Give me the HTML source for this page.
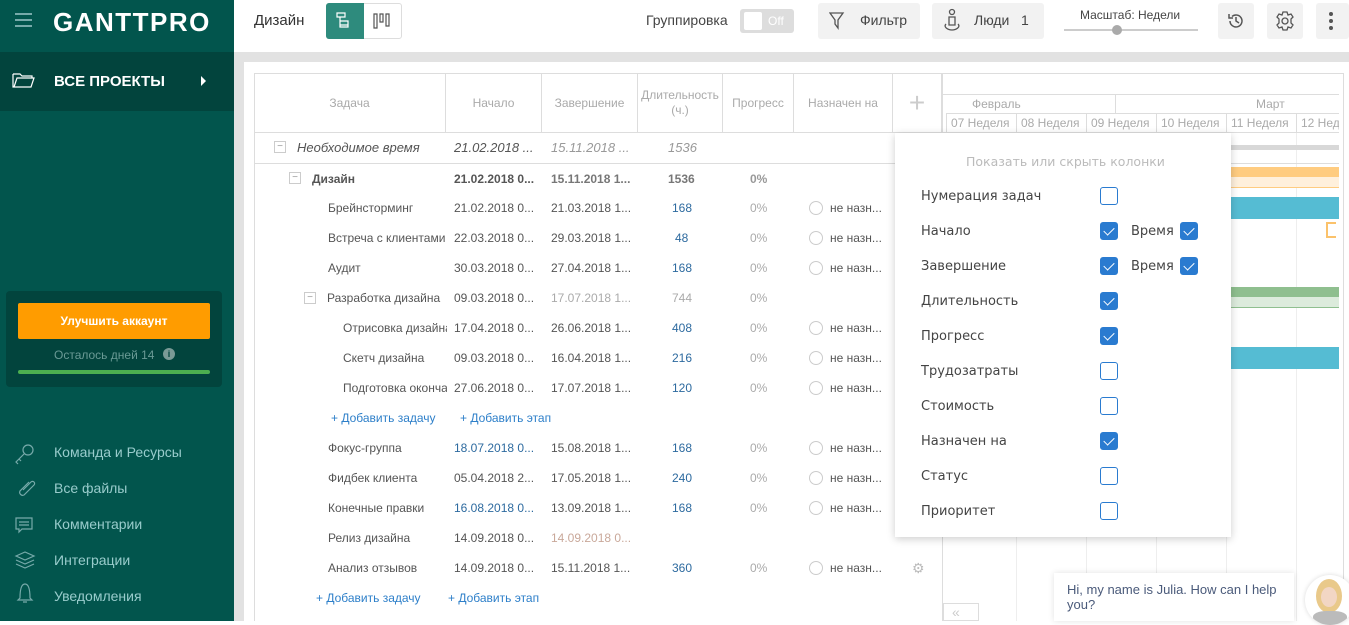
<!DOCTYPE html>
<html><head><meta charset="utf-8"><style>
*{box-sizing:border-box;margin:0;padding:0}
body{width:1349px;height:621px;overflow:hidden;font-family:"Liberation Sans",sans-serif;background:#fff;position:relative;font-size:12px;color:#555}
.a{position:absolute}
.side{left:0;top:0;width:234px;height:621px;background:#02554d}
.nav{left:0;top:52px;width:234px;height:59px;background:#02443d}
.top{left:234px;top:0;width:1115px;height:52px;background:#fff}
.gray{left:234px;top:52px;width:1115px;height:569px;background:#e2e2e2}
.panel{left:244px;top:62px;width:1105px;height:559px;background:#fff}
.btn{background:#f2f2f2;border-radius:3px}
.th{color:#aaa;font-size:12px;text-align:center;display:flex;align-items:center;justify-content:center;border-right:1px solid #ddd;height:59px;top:73px}
.r{font-size:12px;white-space:nowrap;color:#555}
.cb{width:18px;height:18px;border:1.5px solid #2a7bd0;border-radius:3px}
.cb.on{background:#2a7bd0}
.cb.on::after{content:"";position:absolute;left:5px;top:2px;width:5px;height:9px;border:solid #fff;border-width:0 1.5px 1.5px 0;transform:rotate(45deg)}
.pl{font-family:"DejaVu Sans",sans-serif;font-size:13px;color:#444}
.circ{width:14px;height:14px;border:1px solid #ccc;border-radius:50%}
.sb{color:#9cc;font-size:14px}
.wk{display:inline-block;border-left:1px solid #ddd;padding-left:4px;overflow:hidden;white-space:nowrap;height:19px;line-height:19px}
</style></head><body>
<div class="a side"></div>
<div class="a nav"></div>
<div class="a" style="left:15px;top:13px;width:17px;height:2px;background:#7aa;box-shadow:0 6px 0 #7aa,0 12px 0 #7aa"></div>
<div class="a" style="left:53px;top:7px;color:#fff;font-size:26px;font-weight:bold;letter-spacing:1.5px">GANTTPRO</div>
<svg class="a" style="left:12px;top:72px" width="24" height="16"><path d="M1 2h7l2 2h10v2M1 2v13h18l3-9H5L2 15" fill="none" stroke="#fff" stroke-width="1.2"/></svg>
<div class="a" style="left:54px;top:73px;color:#fff;font-size:15px;font-weight:bold">ВСЕ ПРОЕКТЫ</div>
<div class="a" style="left:201px;top:76px;width:0;height:0;border-left:5px solid #fff;border-top:5px solid transparent;border-bottom:5px solid transparent"></div>
<div class="a" style="left:6px;top:291px;width:216px;height:96px;background:#02443d;border-radius:4px"></div>
<div class="a" style="left:18px;top:303px;width:192px;height:36px;background:#ff9c00;border-radius:2px;color:#fff;font-weight:bold;font-size:12px;text-align:center;line-height:36px">Улучшить аккаунт</div>
<div class="a" style="left:54px;top:348px;color:#6a9a95;font-size:12px">Осталось дней 14</div>
<div class="a" style="left:163px;top:348px;width:12px;height:12px;border-radius:50%;background:#7a9a96;color:#02443d;font-size:9px;text-align:center;line-height:12px;font-weight:bold">i</div>
<div class="a" style="left:18px;top:370px;width:192px;height:4px;background:#4caf50;border-radius:2px"></div>
<div class="a sb" style="left:54px;top:444px">Команда и Ресурсы</div>
<div class="a sb" style="left:54px;top:480px">Все файлы</div>
<div class="a sb" style="left:54px;top:516px">Комментарии</div>
<div class="a sb" style="left:54px;top:552px">Интеграции</div>
<div class="a sb" style="left:54px;top:588px">Уведомления</div>
<svg class="a" style="left:14px;top:444px" width="22" height="160" fill="none" stroke="#7aa" stroke-width="1.2"><circle cx="14" cy="6" r="5"/><path d="M10 10L2 18l2 2M5 15l2 2"/><path d="M15 38l-9 9a3 3 0 0 0 4 4l10-10a2 2 0 0 0-3-3l-8 8"/><path d="M2 74h16v11H8l-3 3v-3H2z M5 78h10M5 81h10"/><path d="M2 112l9-4 9 4-9 4z M2 116l9 4 9-4 M2 120l9 4 9-4"/><path d="M6 154c0-10 2-14 5-14s5 4 5 14l2 2H4z M9 158h4"/></svg>
<div class="a top"></div>
<div class="a gray"></div>
<div class="a panel"></div>
<div class="a" style="left:254px;top:12px;font-size:15px;color:#333">Дизайн</div>
<div class="a" style="left:326px;top:3px;width:76px;height:36px;border:1px solid #ddd;border-radius:3px"></div>
<div class="a" style="left:326px;top:3px;width:38px;height:36px;background:#2e8b7d;border-radius:3px 0 0 3px"></div>
<svg class="a" style="left:336px;top:12px" width="60" height="18" fill="none" stroke-width="1.2"><path d="M1 1h8v4H1zM4 5v4h8v4H4zM4 9v6h8v-2" stroke="#fff"/><path d="M38 2h3v14h-3zM44 2h3v8h-3zM50 2h3v12h-3z" stroke="#555"/></svg>
<div class="a" style="left:646px;top:12px;font-size:14px;color:#444">Группировка</div>
<div class="a" style="left:740px;top:9px;width:54px;height:24px;background:#ddd;border-radius:3px"></div>
<div class="a" style="left:744px;top:12px;width:18px;height:18px;background:#fff;border-radius:2px"></div>
<div class="a" style="left:768px;top:14px;color:#fff;font-size:12px">Off</div>
<div class="a btn" style="left:818px;top:3px;width:102px;height:36px"></div>
<svg class="a" style="left:829px;top:12px" width="16" height="18"><path d="M1 1h13l-5 7v8l-3-4V8z" fill="none" stroke="#555" stroke-width="1.3"/></svg>
<div class="a" style="left:860px;top:12px;font-size:14px;color:#444">Фильтр</div>
<div class="a btn" style="left:932px;top:3px;width:112px;height:36px"></div>
<svg class="a" style="left:942px;top:8px" width="20" height="26" fill="none" stroke="#555" stroke-width="1.3"><circle cx="10" cy="4" r="2.5"/><path d="M7 9h6v8H7zM4 16c-3 3 2 6 6 6s9-3 6-6"/></svg>
<div class="a" style="left:974px;top:12px;font-size:14px;color:#444">Люди &nbsp;&nbsp;1</div>
<div class="a" style="left:1080px;top:8px;font-size:12px;color:#444">Масштаб: Недели</div>
<div class="a" style="left:1064px;top:29px;width:134px;height:2px;background:#ccc"></div>
<div class="a" style="left:1112px;top:25px;width:10px;height:10px;border-radius:50%;background:#aaa"></div>
<div class="a btn" style="left:1218px;top:3px;width:36px;height:36px"></div>
<svg class="a" style="left:1227px;top:12px" width="18" height="18" fill="none" stroke="#555" stroke-width="1.5"><path d="M3 9a6 6 0 1 0 2-4.5M2 2v4h4M9 5v4l3 2"/></svg>
<div class="a btn" style="left:1267px;top:3px;width:36px;height:36px"></div>
<svg class="a" style="left:1275px;top:11px" width="20" height="20" fill="none" stroke="#555" stroke-width="1.3"><circle cx="10" cy="10" r="3"/><path d="M8 1h4l1 3 3-1 2 3-2 2v4l2 2-2 3-3-1-1 3H8l-1-3-3 1-2-3 2-2V8L2 6l2-3 3 1z"/></svg>
<div class="a btn" style="left:1316px;top:3px;width:33px;height:36px"></div>
<div class="a" style="left:1329px;top:12px;width:4px;height:4px;border-radius:50%;background:#555;box-shadow:0 7px 0 #555,0 14px 0 #555"></div>

<div class="a" style="left:254px;top:73px;width:1090px;height:548px;border:1px solid #ddd;border-bottom:none"></div>
<div class="a" style="left:254px;top:132px;width:689px;height:1px;background:#ddd"></div>
<div class="a" style="left:942px;top:73px;width:1px;height:548px;background:#ddd"></div>
<div class="a th" style="left:254px;width:192px">Задача</div>
<div class="a th" style="left:446px;width:96px">Начало</div>
<div class="a th" style="left:542px;width:96px">Завершение</div>
<div class="a th" style="left:638px;width:85px;line-height:15px">Длительность<br>(ч.)</div>
<div class="a th" style="left:723px;width:71px">Прогресс</div>
<div class="a th" style="left:794px;width:99px">Назначен на</div>
<div class="a th" style="left:893px;width:49px;font-size:28px;color:#ccc;font-weight:200">+</div>
<div class="a" style="left:943px;top:94px;width:396px;height:1px;background:#ddd"></div>
<div class="a" style="left:943px;top:132px;width:396px;height:1px;background:#ddd"></div>
<div class="a" style="left:1115px;top:94px;width:1px;height:19px;background:#ddd"></div>
<div class="a" style="left:972px;top:97px;color:#aaa">Февраль</div>
<div class="a" style="left:1256px;top:97px;color:#aaa">Март</div>
<div class="a" style="left:946px;top:113px;width:393px;height:19px;overflow:hidden;color:#aaa;white-space:nowrap;font-size:12px;border-top:1px solid #ddd"><span class="wk" style="width:70px">07 Неделя</span><span class="wk" style="width:70px">08 Неделя</span><span class="wk" style="width:70px">09 Неделя</span><span class="wk" style="width:70px">10 Неделя</span><span class="wk" style="width:70px">11 Неделя</span><span class="wk" style="width:43px">12 Неделя</span></div>
<div class="a" style="left:1296px;top:133px;width:1px;height:488px;background:#eee"></div>
<div class="a" style="left:1016px;top:537px;width:1px;height:84px;background:#eee;box-shadow:70px 0 0 #eee,140px 0 0 #eee,210px 0 0 #eee"></div>
<div class="a" style="left:1231px;top:145px;width:108px;height:5px;background:#d8d8d8"></div>
<div class="a" style="left:1231px;top:163px;width:108px;height:1px;background:#ddd"></div>
<div class="a" style="left:1231px;top:167px;width:108px;height:10px;background:#ffcc80"></div>
<div class="a" style="left:1231px;top:177px;width:108px;height:11px;background:#fff0dc;border-bottom:1px solid #ffcc80"></div>
<div class="a" style="left:1231px;top:197px;width:108px;height:22px;background:#55bcd3"></div>
<div class="a" style="left:1326px;top:222px;width:10px;height:16px;border:2px solid #fbc26b;border-right:none"></div>
<div class="a" style="left:1231px;top:287px;width:108px;height:10px;background:#8fbf8f"></div>
<div class="a" style="left:1231px;top:297px;width:108px;height:11px;background:#dcebdc;border-bottom:1px solid #8fbf8f"></div>
<div class="a" style="left:1231px;top:347px;width:108px;height:22px;background:#55bcd3"></div>
<div class="a" style="left:943px;top:603px;width:36px;height:18px;border:1px solid #ddd;color:#ccc;font-size:14px;padding-left:8px">«</div>

<div class="a" style="left:254px;top:163px;width:689px;height:1px;background:#ddd"></div>
<div class="a" style="left:274px;top:141px;width:12px;height:12px;border:1px solid #ccc;font-size:10px;line-height:9px;text-align:center;color:#999">−</div>
<div class="a r" style="left:297px;top:140px;font-style:italic;font-size:13px;color:#555">Необходимое время</div>
<div class="a r" style="left:454px;top:140px;font-style:italic;font-size:13px">21.02.2018 ...</div>
<div class="a r" style="left:551px;top:140px;font-style:italic;font-size:13px;color:#999">15.11.2018 ...</div>
<div class="a r" style="left:668px;top:140px;font-style:italic;font-size:13px;color:#999">1536</div>

<div class="a" style="left:289px;top:172px;width:12px;height:12px;border:1px solid #ccc;font-size:10px;line-height:9px;text-align:center;color:#999">−</div>
<div class="a r" style="left:312px;top:172px;font-weight:bold">Дизайн</div>
<div class="a r" style="left:454px;top:172px;font-weight:bold">21.02.2018 0...</div>
<div class="a r" style="left:551px;top:172px;font-weight:bold;color:#777">15.11.2018 1...</div>
<div class="a r" style="left:668px;top:172px;font-weight:bold;color:#777">1536</div>
<div class="a r" style="left:750px;top:172px;font-weight:bold;color:#999">0%</div>

<div class="a r" style="left:328px;top:201px">Брейнсторминг</div><div class="a r" style="left:454px;top:201px">21.02.2018 0...</div><div class="a r" style="left:551px;top:201px">21.03.2018 1...</div><div class="a r" style="left:672px;top:201px;color:#2d6a9f">168</div><div class="a r" style="left:750px;top:201px;color:#aaa">0%</div><div class="a circ" style="left:809px;top:201px"></div><div class="a r" style="left:830px;top:201px">не назн...</div>
<div class="a r" style="left:328px;top:231px;width:118px;overflow:hidden">Встреча с клиентами</div><div class="a r" style="left:454px;top:231px">22.03.2018 0...</div><div class="a r" style="left:551px;top:231px">29.03.2018 1...</div><div class="a r" style="left:675px;top:231px;color:#2d6a9f">48</div><div class="a r" style="left:750px;top:231px;color:#aaa">0%</div><div class="a circ" style="left:809px;top:231px"></div><div class="a r" style="left:830px;top:231px">не назн...</div>
<div class="a r" style="left:328px;top:261px">Аудит</div><div class="a r" style="left:454px;top:261px">30.03.2018 0...</div><div class="a r" style="left:551px;top:261px">27.04.2018 1...</div><div class="a r" style="left:672px;top:261px;color:#2d6a9f">168</div><div class="a r" style="left:750px;top:261px;color:#aaa">0%</div><div class="a circ" style="left:809px;top:261px"></div><div class="a r" style="left:830px;top:261px">не назн...</div>
<div class="a" style="left:304px;top:292px;width:12px;height:12px;border:1px solid #ccc;font-size:10px;line-height:9px;text-align:center;color:#999">−</div>
<div class="a r" style="left:327px;top:291px">Разработка дизайна</div><div class="a r" style="left:454px;top:291px">09.03.2018 0...</div><div class="a r" style="left:551px;top:291px;color:#aaa">17.07.2018 1...</div><div class="a r" style="left:672px;top:291px;color:#aaa">744</div><div class="a r" style="left:750px;top:291px;color:#aaa">0%</div>
<div class="a r" style="left:343px;top:321px;width:104px;overflow:hidden">Отрисовка дизайна</div><div class="a r" style="left:454px;top:321px">17.04.2018 0...</div><div class="a r" style="left:551px;top:321px">26.06.2018 1...</div><div class="a r" style="left:672px;top:321px;color:#2d6a9f">408</div><div class="a r" style="left:750px;top:321px;color:#aaa">0%</div><div class="a circ" style="left:809px;top:321px"></div><div class="a r" style="left:830px;top:321px">не назн...</div>
<div class="a r" style="left:343px;top:351px">Скетч дизайна</div><div class="a r" style="left:454px;top:351px">09.03.2018 0...</div><div class="a r" style="left:551px;top:351px">16.04.2018 1...</div><div class="a r" style="left:672px;top:351px;color:#2d6a9f">216</div><div class="a r" style="left:750px;top:351px;color:#aaa">0%</div><div class="a circ" style="left:809px;top:351px"></div><div class="a r" style="left:830px;top:351px">не назн...</div>
<div class="a r" style="left:343px;top:381px;width:104px;overflow:hidden">Подготовка окончательного</div><div class="a r" style="left:454px;top:381px">27.06.2018 0...</div><div class="a r" style="left:551px;top:381px">17.07.2018 1...</div><div class="a r" style="left:672px;top:381px;color:#2d6a9f">120</div><div class="a r" style="left:750px;top:381px;color:#aaa">0%</div><div class="a circ" style="left:809px;top:381px"></div><div class="a r" style="left:830px;top:381px">не назн...</div>
<div class="a r" style="left:331px;top:411px;color:#2d7fc9">+ Добавить задачу</div><div class="a r" style="left:460px;top:411px;color:#2d7fc9">+ Добавить этап</div>
<div class="a r" style="left:328px;top:441px">Фокус-группа</div><div class="a r" style="left:454px;top:441px;color:#2d6a9f">18.07.2018 0...</div><div class="a r" style="left:551px;top:441px">15.08.2018 1...</div><div class="a r" style="left:672px;top:441px;color:#2d6a9f">168</div><div class="a r" style="left:750px;top:441px;color:#aaa">0%</div><div class="a circ" style="left:809px;top:441px"></div><div class="a r" style="left:830px;top:441px">не назн...</div>
<div class="a r" style="left:328px;top:471px">Фидбек клиента</div><div class="a r" style="left:454px;top:471px">05.04.2018 2...</div><div class="a r" style="left:551px;top:471px">17.05.2018 1...</div><div class="a r" style="left:672px;top:471px;color:#2d6a9f">240</div><div class="a r" style="left:750px;top:471px;color:#aaa">0%</div><div class="a circ" style="left:809px;top:471px"></div><div class="a r" style="left:830px;top:471px">не назн...</div>
<div class="a r" style="left:328px;top:501px">Конечные правки</div><div class="a r" style="left:454px;top:501px;color:#2d6a9f">16.08.2018 0...</div><div class="a r" style="left:551px;top:501px">13.09.2018 1...</div><div class="a r" style="left:672px;top:501px;color:#2d6a9f">168</div><div class="a r" style="left:750px;top:501px;color:#aaa">0%</div><div class="a circ" style="left:809px;top:501px"></div><div class="a r" style="left:830px;top:501px">не назн...</div>
<div class="a r" style="left:328px;top:531px">Релиз дизайна</div><div class="a r" style="left:454px;top:531px">14.09.2018 0...</div><div class="a r" style="left:551px;top:531px;color:#c9a89a">14.09.2018 0...</div>
<div class="a r" style="left:328px;top:561px">Анализ отзывов</div><div class="a r" style="left:454px;top:561px">14.09.2018 0...</div><div class="a r" style="left:551px;top:561px">15.11.2018 1...</div><div class="a r" style="left:672px;top:561px;color:#2d6a9f">360</div><div class="a r" style="left:750px;top:561px;color:#aaa">0%</div><div class="a circ" style="left:809px;top:561px"></div><div class="a r" style="left:830px;top:561px">не назн...</div>
<div class="a" style="left:912px;top:560px;color:#bbb;font-size:14px">⚙</div>
<div class="a r" style="left:316px;top:591px;color:#2d7fc9">+ Добавить задачу</div><div class="a r" style="left:448px;top:591px;color:#2d7fc9">+ Добавить этап</div>

<div class="a" style="left:895px;top:133px;width:336px;height:404px;background:#fff;box-shadow:0 2px 8px rgba(0,0,0,.2)"></div>
<div class="a" style="left:966px;top:154px;font-family:'DejaVu Sans',sans-serif;font-size:12.5px;color:#bbb">Показать или скрыть колонки</div>
<div class="a pl" style="left:921px;top:189px">Нумерация задач</div><div class="a cb" style="left:1100px;top:187px"></div>
<div class="a pl" style="left:921px;top:224px">Начало</div><div class="a cb on" style="left:1100px;top:222px"></div><div class="a pl" style="left:1131px;top:224px">Время</div><div class="a cb on" style="left:1180px;top:222px"></div>
<div class="a pl" style="left:921px;top:259px">Завершение</div><div class="a cb on" style="left:1100px;top:257px"></div><div class="a pl" style="left:1131px;top:259px">Время</div><div class="a cb on" style="left:1180px;top:257px"></div>
<div class="a pl" style="left:921px;top:294px">Длительность</div><div class="a cb on" style="left:1100px;top:292px"></div>
<div class="a pl" style="left:921px;top:329px">Прогресс</div><div class="a cb on" style="left:1100px;top:327px"></div>
<div class="a pl" style="left:921px;top:364px">Трудозатраты</div><div class="a cb" style="left:1100px;top:362px"></div>
<div class="a pl" style="left:921px;top:399px">Стоимость</div><div class="a cb" style="left:1100px;top:397px"></div>
<div class="a pl" style="left:921px;top:434px">Назначен на</div><div class="a cb on" style="left:1100px;top:432px"></div>
<div class="a pl" style="left:921px;top:469px">Статус</div><div class="a cb" style="left:1100px;top:467px"></div>
<div class="a pl" style="left:921px;top:504px">Приоритет</div><div class="a cb" style="left:1100px;top:502px"></div>

<div class="a" style="left:1054px;top:573px;width:240px;height:48px;background:#fff;box-shadow:0 0 6px rgba(0,0,0,.12)"></div>
<div class="a" style="left:1067px;top:582px;font-family:'Liberation Sans',sans-serif;font-size:13px;color:#4a5a7a;line-height:15px;width:222px">Hi, my name is Julia. How can I help you?</div>
<div class="a" style="left:1305px;top:575px;width:50px;height:50px;border-radius:50%;background:#fff;box-shadow:0 0 5px rgba(0,0,0,.15);overflow:hidden"><div style="position:absolute;left:11px;top:4px;width:26px;height:34px;border-radius:50%;background:#e9c98a"></div><div style="position:absolute;left:16px;top:12px;width:16px;height:20px;border-radius:50%;background:#f2d6c4"></div><div style="position:absolute;left:8px;top:36px;width:34px;height:14px;background:#bbb;border-radius:40% 40% 0 0"></div></div>
</body></html>
